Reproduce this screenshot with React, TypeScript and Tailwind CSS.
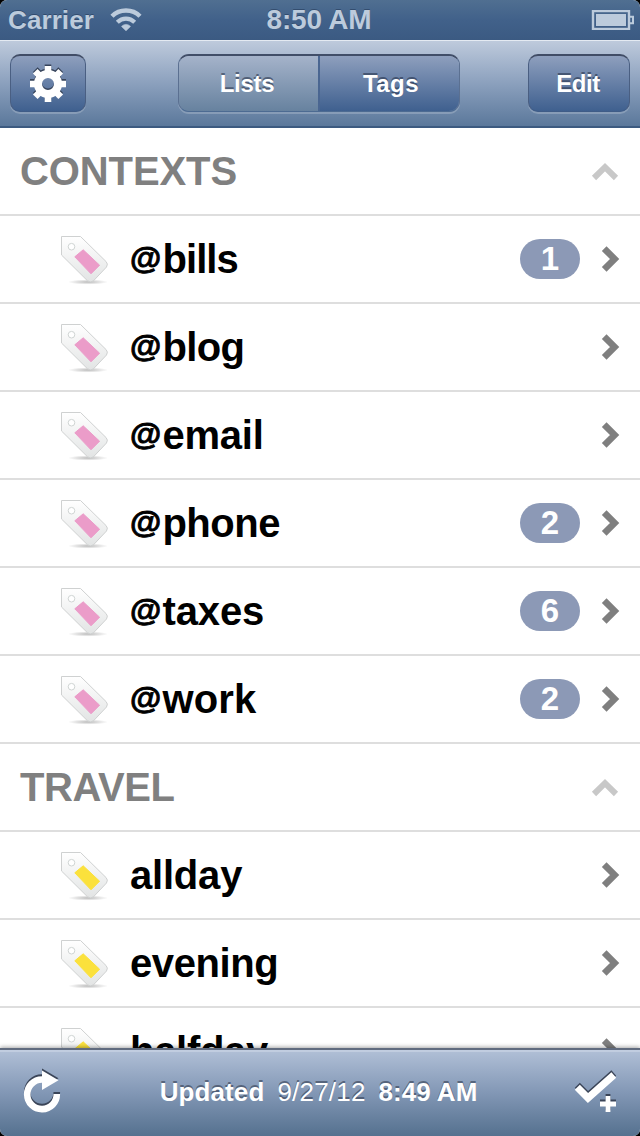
import clsx from "clsx";

interface Tag {
  name: string;
  count?: number;
  spacing: string;
}

interface TagGroup {
  title: string;
  titleSpacing: string;
  color: string;
  tags: Tag[];
}

const GROUPS: TagGroup[] = [
  {
    title: "CONTEXTS", titleSpacing: "tracking-[-0.1px]", color: "#eb9cc9",
    tags: [
      { name: "@bills", count: 1, spacing: "tracking-[-0.9px]" },
      { name: "@blog", spacing: "tracking-[-0.6px]" },
      { name: "@email", spacing: "tracking-[-0.2px]" },
      { name: "@phone", count: 2, spacing: "tracking-[-0.5px]" },
      { name: "@taxes", count: 6, spacing: "tracking-[-0.1px]" },
      { name: "@work", count: 2, spacing: "tracking-[0.2px]" },
    ],
  },
  {
    title: "TRAVEL", titleSpacing: "tracking-[-0.4px]", color: "#fbe13c",
    tags: [
      { name: "allday", spacing: "tracking-[-0.2px]" },
      { name: "evening", spacing: "tracking-[-0.4px]" },
      { name: "halfday", spacing: "tracking-[-0.3px]" },
    ],
  },
];

const BUTTON = "h-[58px] rounded-[10px] border border-t-2 border-t-[#414d66] border-x-[#4a5f82] border-b-[#3f5c87] bg-linear-to-b from-[#8e9fbd] to-[#3f608f] shadow-[0_2px_0_rgba(255,255,255,0.2)] flex items-center justify-center";
const LABEL = "text-[24px] leading-none font-bold text-white [text-shadow:0_-2px_0_rgba(30,42,65,0.55)]";

function StatusBar() {
  return (
    <div className="h-10 shrink-0 px-2 grid grid-cols-[1fr_auto_1fr] items-center bg-linear-to-b from-[#506f91] via-[#41618a] to-[#3b5a82] text-[#bccbdc] font-bold text-[28px] leading-none [text-shadow:0_-1px_0_rgba(30,50,80,0.5)]">
      <div className="flex items-center gap-[16px]">
        <span className="text-[26px] tracking-[0.1px]">Carrier</span>
        <svg width="32" height="24" viewBox="0 0 32 24" fill="none" stroke="#bccbdc">
          <path d="M2 8.3C9.5 0.6 22.5 0.6 30 8.3" strokeWidth="4.4" />
          <path d="M7.3 14.2C12.3 9.3 19.7 9.3 24.7 14.2" strokeWidth="4.2" />
          <path d="M16 22.8l-4.5-4.4c2.5-2.7 6.5-2.7 9 0z" fill="#bccbdc" strokeWidth="0.6" />
        </svg>
      </div>
      <span className="tracking-[-0.2px] -ml-[2px]">8:50 AM</span>
      <svg className="justify-self-end -mr-[3px]" width="44" height="20" viewBox="0 0 44 20">
        <rect x="2" y="1" width="36" height="18" fill="none" stroke="#bccbdc" strokeWidth="2.4" />
        <rect x="5" y="4" width="30" height="12" fill="#bccbdc" />
        <path d="M39 6.7h3v6.6h-3" fill="none" stroke="#bccbdc" strokeWidth="2" />
      </svg>
    </div>
  );
}

function Gear() {
  const teeth = [0, 45, 90, 135, 180, 225, 270, 315];
  return (
    <svg width="38" height="40" viewBox="-19 -20 38 40">
      {["#36435a", "#ffffff"].map((fill, i) => (
        <g key={fill} transform={i === 0 ? "translate(0 -1.6)" : "translate(0 0)"}>
          <circle r="10" fill="none" stroke={fill} strokeWidth="8" />
          {teeth.map((a) => (
            <path key={a} d="M-3.3-18h6.6v7h-6.6z" fill={fill} transform={`rotate(${a})`} />
          ))}
        </g>
      ))}
    </svg>
  );
}

function NavBar() {
  return (
    <div className="h-[88px] shrink-0 px-[10px] pt-3 grid grid-cols-[1fr_282px_1fr] items-start border-t border-t-[#e4eaf2] border-b-2 border-b-[#3c5a80] bg-linear-to-b from-[#becadc] via-[#8ba0bd] to-[#5b789b]">
      <button className={clsx(BUTTON, "w-[76px] mt-px")}><Gear /></button>
      <div className="mt-px -ml-[1px] w-[282px] h-[58px] flex overflow-hidden rounded-[11px] border border-t-2 border-t-[#414e68] border-x-[#5b7091] border-b-[#4d6b92] shadow-[0_2px_0_rgba(255,255,255,0.2)]">
        <button className="w-[141px] flex items-center justify-center border-r-2 border-r-[#4a6691] bg-linear-to-b from-[#a5b3ca] to-[#67829f]">
          <span className={clsx(LABEL, "tracking-[-0.3px] -ml-[3px]")}>Lists</span>
        </button>
        <button className="flex-1 flex items-center justify-center bg-linear-to-b from-[#8e9fbd] to-[#3f608f]">
          <span className={clsx(LABEL, "tracking-[0.4px] ml-[3px]")}>Tags</span>
        </button>
      </div>
      <button className={clsx(BUTTON, "w-[102px] mt-px justify-self-end")}>
        <span className={clsx(LABEL, "tracking-[-0.4px] -ml-[2px]")}>Edit</span>
      </button>
    </div>
  );
}

function TagIcon({ color, id }: { color: string; id: string }) {
  return (
    <svg className="ml-[60px] mt-[18px] shrink-0" width="50" height="54" viewBox="0 0 50 54">
      <defs>
        <linearGradient id={`${id}-body`} x1="0" y1="0" x2="0" y2="1">
          <stop offset="0" stopColor="#ffffff" />
          <stop offset="1" stopColor="#e2e4e4" />
        </linearGradient>
        <radialGradient id={`${id}-shadow`}>
          <stop offset="0" stopColor="#777" stopOpacity="0.5" />
          <stop offset="1" stopColor="#777" stopOpacity="0" />
        </radialGradient>
      </defs>
      <ellipse cx="28" cy="48" rx="20" ry="2.6" fill={`url(#${id}-shadow)`} />
      <path d="M1.5 2.5H20.5L46 27.5Q48.5 30 46.5 33L33.5 46.8Q30.5 49 27.5 46.8L1.5 21Z" fill={`url(#${id}-body)`} stroke="#cfd1d1" />
      <circle cx="11.5" cy="12.7" r="3.3" fill="#fff" stroke="#d0d5d4" />
      <path d="M23.2 15.8L39.6 31.2L31 39.8L14.8 22.8Z" fill={color} stroke={color} strokeLinejoin="round" />
    </svg>
  );
}

function TagName({ name, spacing }: { name: string; spacing: string }) {
  const at = name.startsWith("@");
  return (
    <span className={clsx("ml-5 flex-1 text-[40px] leading-[86px] font-bold text-black whitespace-nowrap", spacing)}>
      {at && <span className="relative -top-[4px] text-[32px] leading-none tracking-[1.2px] [-webkit-text-stroke:0.9px_#000]">@</span>}
      {at ? name.slice(1) : name}
    </span>
  );
}

function Group({ group }: { group: TagGroup }) {
  return (
    <section>
      <header className="h-[88px] border-b-2 border-[#dedede] pl-5 pr-[21px] flex items-center justify-between">
        <h2 className={clsx("text-[40px] leading-none font-bold text-[#808080]", group.titleSpacing)}>{group.title}</h2>
        <svg className="mt-[2px]" width="28" height="20" viewBox="0 0 28 20" fill="none" stroke="#c8c8c8" strokeWidth="6">
          <path d="M3 16L14 5.2L25 16" />
        </svg>
      </header>
      {group.tags.map((tag) => (
        <div key={tag.name} className="h-[88px] border-b-2 border-[#dedede] flex items-start">
          <TagIcon color={group.color} id={tag.name.replace("@", "")} />
          <TagName name={tag.name} spacing={tag.spacing} />
          {tag.count && (
            <span className="mt-[23px] w-[60px] h-10 rounded-full bg-[#8c99b6] text-white text-[33px] leading-[40px] font-bold text-center">{tag.count}</span>
          )}
          <svg className="mt-[29px] ml-5 mr-[19px]" width="21" height="28" viewBox="0 0 21 28" fill="none" stroke="#7f7f7f" strokeWidth="6.6">
            <path d="M4.2 3.6L14.6 14L4.2 24.4" />
          </svg>
        </div>
      ))}
    </section>
  );
}

function Toolbar() {
  return (
    <div className="relative h-[88px] shrink-0 flex items-center justify-between pl-[22px] pr-[22px] border-t-2 border-t-[#606b7f] bg-linear-to-b from-[#b1c0d7] via-[#8297b5] to-[#55718f] shadow-[0_-1px_4px_rgba(0,0,0,0.35),inset_0_2px_0_#c1cde0]">
      <svg className="overflow-visible" width="40" height="48" viewBox="0 0 40 48">
        {["#3b4558", "#ffffff"].map((c, i) => (
          <g key={c} transform={i === 0 ? "translate(0 -2)" : "translate(0 0)"}>
            <path d="M20 10.5A14.8 14.8 0 1 0 34.8 25" fill="none" stroke={c} strokeWidth="6.6" />
            <path d="M20 1.5L36.5 11.2L20 21Z" fill={c} />
          </g>
        ))}
      </svg>
      <div className="-mt-[2px] ml-[3px] flex gap-[13px] text-[26px] leading-none text-white [text-shadow:0_-2px_0_rgba(50,60,80,0.6)] whitespace-nowrap">
        <span className="font-bold tracking-[0.1px]">Updated</span>
        <span className="tracking-[0.2px]">9/27/12</span>
        <span className="font-bold">8:49 AM</span>
      </div>
      <svg className="overflow-visible" width="46" height="48" viewBox="0 0 46 48">
        {["#3b4558", "#ffffff"].map((c, i) => (
          <g key={c} transform={i === 0 ? "translate(0 -2)" : "translate(0 0)"} fill="none" stroke={c}>
            <path d="M5.3 18.3L16 29L41.8 6" strokeWidth="7.2" />
            <path d="M36 27v16M28 35h16" strokeWidth="4.8" />
          </g>
        ))}
      </svg>
    </div>
  );
}

export default function App() {
  return (
    <div className="w-[640px] h-[1136px] bg-black">
      <div className="h-full flex flex-col overflow-hidden rounded-[7px] bg-white font-['Liberation_Sans',Arial,sans-serif]">
        <StatusBar />
        <NavBar />
        <main className="flex-1 min-h-0 overflow-hidden">
          {GROUPS.map((group) => <Group key={group.title} group={group} />)}
        </main>
        <Toolbar />
      </div>
    </div>
  );
}
